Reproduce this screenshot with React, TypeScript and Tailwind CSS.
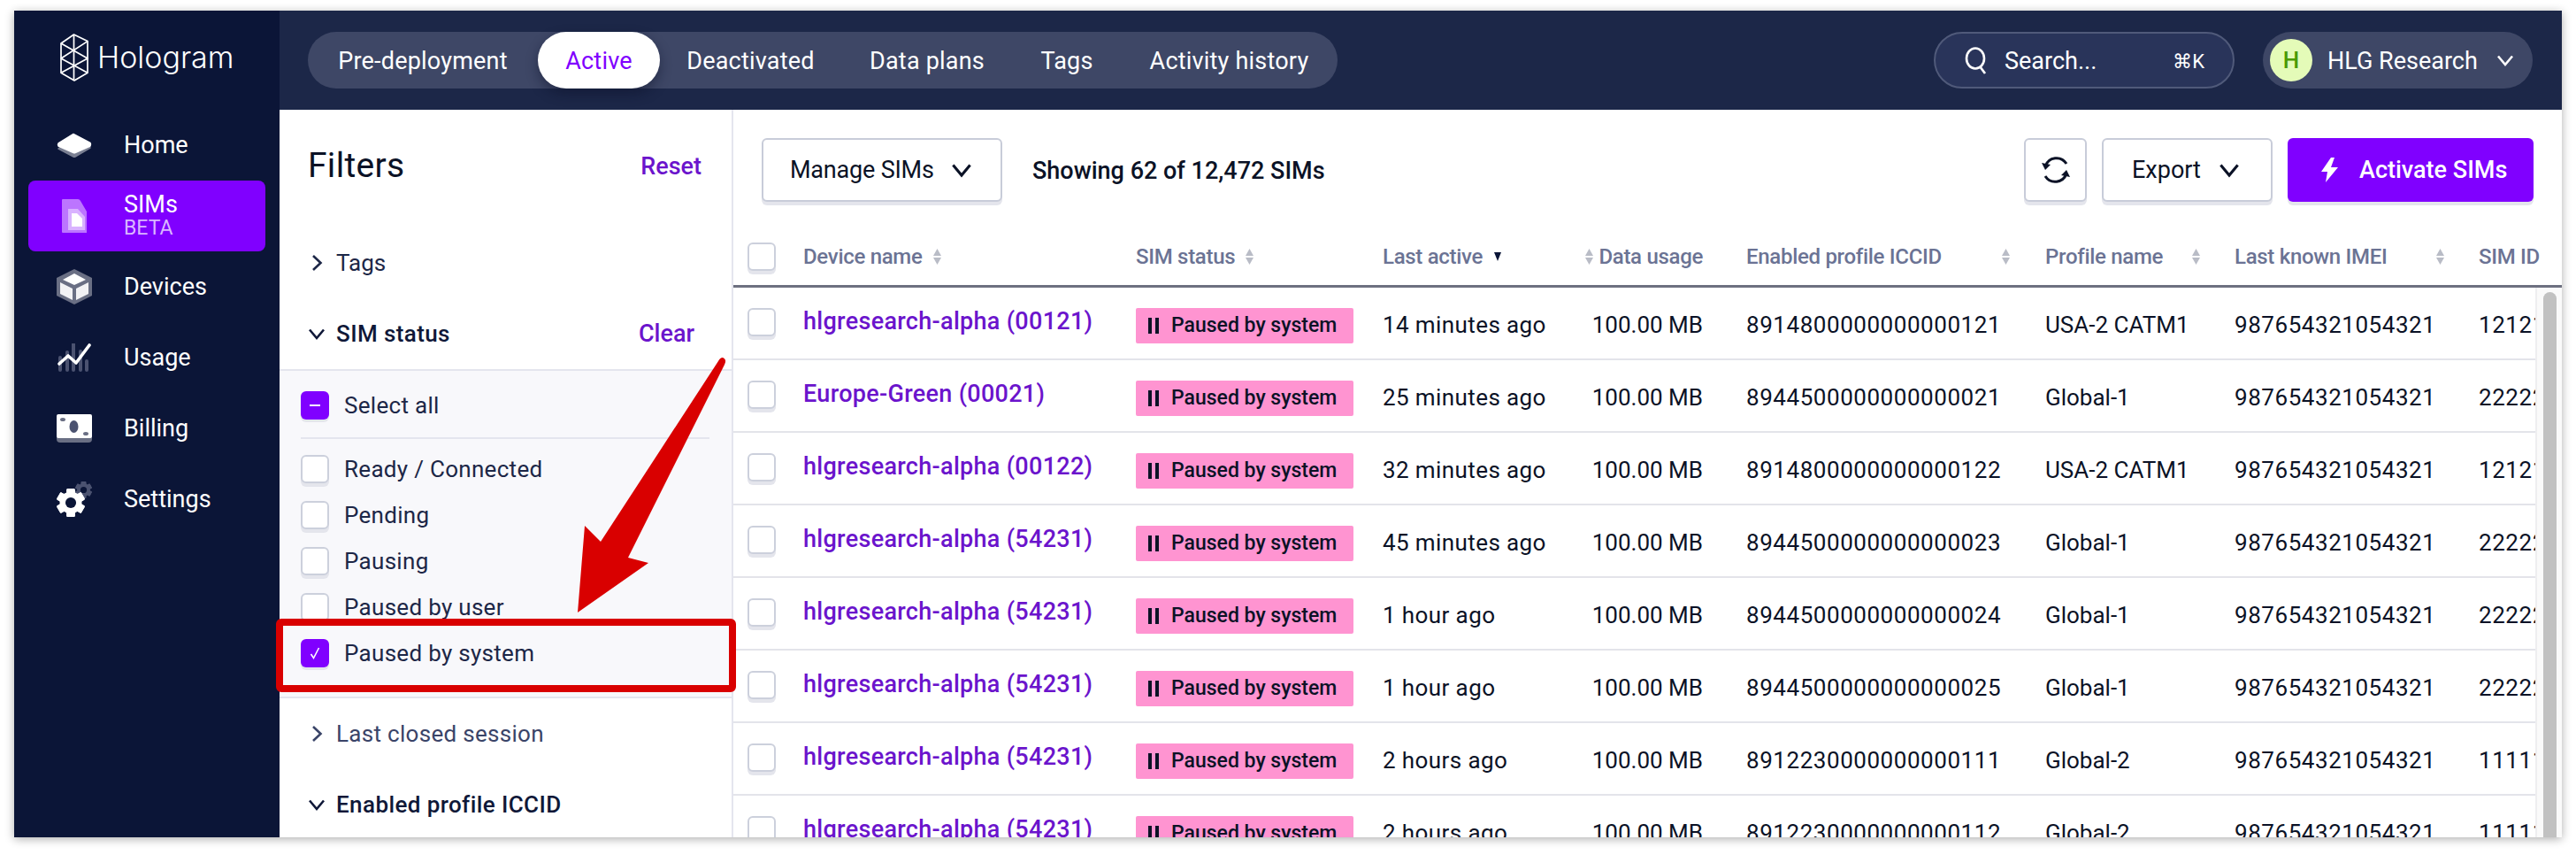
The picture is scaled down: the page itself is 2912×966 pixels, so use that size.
import React from "react";

const FONT = "font-['Roboto','Noto_Sans',sans-serif]";

function Chevron({ dir = "down", className = "", size = 20, sw = 3 }: { dir?: "down" | "right"; className?: string; size?: number; sw?: number }) {
  return (
    <svg width={size} height={size} viewBox="0 0 20 20" fill="none" stroke="currentColor" strokeWidth={sw} className={`shrink-0 ${className}`}>
      {dir === "down" ? <path d="M2 5.5 L10 15 L18 5.5" /> : <path d="M6 2 L14.5 10 L6 18" />}
    </svg>
  );
}

function Sort({ active = false }: { active?: boolean }) {
  if (active)
    return (
      <svg width="10" height="10" viewBox="0 0 10 10" className="shrink-0">
        <path d="M1 0 H9 L5 10 Z" fill="#0b1537" />
      </svg>
    );
  return (
    <svg width="9" height="18" viewBox="0 0 9 18" className="shrink-0">
      <path d="M4.5 0 L9 8 H0 Z M0 10 H9 L4.5 18 Z" fill="#b9bcc6" />
    </svg>
  );
}

function Box({ state = "off" }: { state?: "off" | "on" | "mixed" }) {
  if (state === "off")
    return <span className="block w-[32px] h-[32px] shrink-0 rounded-[6px] bg-white border-2 border-[#ccd0dc] shadow-[0_4px_0_#e4e5ec]" />;
  return (
    <span className="flex items-center justify-center w-[32px] h-[32px] shrink-0 rounded-[6px] bg-[#8000ff] shadow-[0_3px_0_#e4e5ec]">
      {state === "mixed" ? (
        <span className="block w-[12px] h-[2px] bg-white" />
      ) : (
        <svg width="14" height="16" viewBox="0 0 14 16" fill="none" stroke="#fff" strokeWidth="1.6">
          <path d="M2.5 9 L5.5 13.5 L11.5 2" />
        </svg>
      )}
    </span>
  );
}

function Logo() {
  return (
    <svg width="32" height="54" viewBox="0 0 32 54" fill="none" stroke="#fff" strokeWidth="1.7" strokeLinejoin="round">
      <path d="M1 11 L15.5 1 L31 8.6 V44.3 L16 53 L1 44.3 Z" />
      <path d="M15.5 1 V53" />
      <path d="M1 11 L31 28 L1 44.3 M31 8.6 L1 28 L31 44.3" />
    </svg>
  );
}

const HomeIcon = () => (
  <svg width="40" height="28" viewBox="0 0 40 28">
    <path d="M2 18 L20 7 L38 17 L21 27 Q20 27.6 19 27 Z" fill="#7a7f92" stroke="#7a7f92" strokeWidth="1.5" strokeLinejoin="round" />
    <path d="M19 1.5 L38 11.5 Q39 13 38 15 L21 22.5 Q20 23 19 22.5 L2 15 Q1 13 2 12 Z" fill="#fff" stroke="#fff" strokeWidth="1.5" strokeLinejoin="round" />
  </svg>
);
const SimIcon = () => (
  <svg width="28" height="38" viewBox="0 0 28 38">
    <path d="M1 0 H18 Q20 0 21 2 L28 14 V38 H1 Q0 38 0 37 V1 Q0 0 1 0 Z" fill="#bc75ff" />
    <path d="M7 11 H18 L26 20 V35 H7 Z" fill="#d9b3ff" />
    <path d="M11 16 H17 L23 22 V31 H11 Z" fill="#fff" />
  </svg>
);
const DevicesIcon = () => (
  <svg width="40" height="40" viewBox="0 0 40 40">
    <path d="M20 0 L40 10 V30 L20 40 L0 30 V10 Z" fill="#6a6f84" />
    <path d="M20 5 L33 12 L20 18 L7 12 Z" fill="#fff" />
    <path d="M4 15 L18 22 V35 L4 28 Z M36 15 L22 22 V35 L36 28 Z" fill="#f2f2f5" />
  </svg>
);
const UsageIcon = () => (
  <svg width="40" height="32" viewBox="0 0 40 32" fill="none">
    <g stroke="#4b5270" strokeWidth="4" strokeLinecap="round">
      <path d="M4 16 V30 M12 10 V30 M19 1 V30 M27 9 V30 M34 20 V30" />
    </g>
    <path d="M3 23 L13 14 L22 22 L37 2" stroke="#fff" strokeWidth="3.6" strokeLinecap="round" strokeLinejoin="round" />
  </svg>
);
const BillingIcon = () => (
  <svg width="40" height="32" viewBox="0 0 40 32">
    <path d="M0 24 H40 V28 Q40 32 36 32 H4 Q0 32 0 28 Z" fill="#6a6f84" />
    <rect x="0" y="0" width="40" height="27" rx="2" fill="#fff" />
    <ellipse cx="19.5" cy="14" rx="5" ry="7" fill="#4b5270" />
    <ellipse cx="7" cy="6" rx="3" ry="2" fill="#6a6f84" />
    <ellipse cx="33" cy="22" rx="3" ry="2" fill="#6a6f84" />
  </svg>
);
function Gear({ cx, cy, r, color, hole }: { cx: number; cy: number; r: number; color: string; hole: string }) {
  const teeth = [0, 60, 120, 180, 240, 300];
  return (
    <g>
      {teeth.map((a) => (
        <rect key={a} x={cx - r * 0.3} y={cy - r} width={r * 0.6} height={r * 2} rx={r * 0.1} fill={color} transform={`rotate(${a} ${cx} ${cy})`} />
      ))}
      <circle cx={cx} cy={cy} r={r * 0.78} fill={color} />
      <circle cx={cx} cy={cy} r={r * 0.38} fill={hole} />
    </g>
  );
}
const SettingsIcon = () => (
  <svg width="40" height="40" viewBox="0 0 40 40">
    <Gear cx={30.5} cy={9.5} r={9.5} color="#4b5270" hole="#0b1537" />
    <Gear cx={16} cy={24} r={16} color="#fff" hole="#0b1537" />
  </svg>
);

const NAV = [
  { label: "Home", icon: <HomeIcon /> },
  { label: "SIMs", icon: <SimIcon />, active: true },
  { label: "Devices", icon: <DevicesIcon /> },
  { label: "Usage", icon: <UsageIcon /> },
  { label: "Billing", icon: <BillingIcon /> },
  { label: "Settings", icon: <SettingsIcon /> },
];

const TABS = [
  { t: "Pre-deployment", w: "w-[260px]" },
  { t: "Active", w: "w-[138px]" },
  { t: "Deactivated", w: "w-[205px]" },
  { t: "Data plans", w: "w-[194px]" },
  { t: "Tags", w: "w-[122px]" },
  { t: "Activity history", w: "w-[245px]" },
];

const ROWS = [
  ["hlgresearch-alpha (00121)", "14 minutes ago", "8914800000000000121", "USA-2 CATM1", "12121212"],
  ["Europe-Green (00021)", "25 minutes ago", "8944500000000000021", "Global-1", "22222222"],
  ["hlgresearch-alpha (00122)", "32 minutes ago", "8914800000000000122", "USA-2 CATM1", "12121212"],
  ["hlgresearch-alpha (54231)", "45 minutes ago", "8944500000000000023", "Global-1", "22222222"],
  ["hlgresearch-alpha (54231)", "1 hour ago", "8944500000000000024", "Global-1", "22222222"],
  ["hlgresearch-alpha (54231)", "1 hour ago", "8944500000000000025", "Global-1", "22222222"],
  ["hlgresearch-alpha (54231)", "2 hours ago", "8912230000000000111", "Global-2", "11111111"],
  ["hlgresearch-alpha (54231)", "2 hours ago", "8912230000000000112", "Global-2", "11111111"],
];

const GRID = "grid grid-cols-[63px_376px_279px_217px_194px_338px_214px_276px_64px] w-[2021px]";

const STATUS = ["Ready / Connected", "Pending", "Pausing", "Paused by user"];

export default function App() {
  return (
    <div className={`${FONT} w-[2912px] h-[966px] bg-white pt-[12px] pl-[16px] overflow-hidden`}>
      <div className="relative flex w-[2880px] h-[934px] overflow-hidden shadow-[0_2px_10px_rgba(0,0,0,0.32)]">
        <aside className="w-[300px] shrink-0 bg-[#0b1537] text-white">
          <div className="h-[112px] flex items-center pl-[52px] gap-[10px] pb-[6px]">
            <Logo />
            <span className="font-['Inter',sans-serif] text-[34px] font-light leading-none">Hologram</span>
          </div>
          <nav className="flex flex-col">
            {NAV.map((n) => (
              <div key={n.label} className="h-[80px] px-[16px]">
                <div className={`h-full flex items-center rounded-[8px] ${n.active ? "bg-[#8000ff]" : ""}`}>
                  <span className="w-[108px] pl-[32px] flex justify-start shrink-0">
                    <span className="w-[40px] flex justify-center">{n.icon}</span>
                  </span>
                  {n.active ? (
                    <span className="flex flex-col">
                      <span className="text-[27px] leading-[28px]">SIMs</span>
                      <span className="text-[23px] leading-[26px] text-[#dab6ff]">BETA</span>
                    </span>
                  ) : (
                    <span className="text-[27px] leading-none">{n.label}</span>
                  )}
                </div>
              </div>
            ))}
          </nav>
        </aside>

        <div className="flex-1 min-w-0 flex flex-col">
          <header className="h-[112px] shrink-0 bg-[#1c2748] flex items-center justify-between pl-[32px] pr-[33px] text-white">
            <div className="flex h-[64px] rounded-full bg-[#3e4766] text-[27px]">
              {TABS.map(({ t, w }) => (
                <span
                  key={t}
                  className={`flex items-center justify-center pt-[2px] rounded-full tracking-[0.2px] ${w} ${t === "Active" ? "bg-white text-[#8000ff] shadow-[0_6px_14px_rgba(10,15,40,0.45)]" : ""}`}
                >
                  {t}
                </span>
              ))}
            </div>
            <div className="flex items-center gap-[32px]">
              <div className="flex items-center w-[340px] h-[64px] rounded-full border-2 border-[#505a7a] bg-[#29345a] pl-[33px] pr-[32px] text-[27px]">
                <svg width="26" height="32" viewBox="0 0 26 32" fill="none" stroke="#fff" strokeWidth="2.6" className="shrink-0">
                  <ellipse cx="12" cy="14" rx="10" ry="11.5" />
                  <path d="M17 23 L23 31" />
                </svg>
                <span className="ml-[19px] flex-1 pt-[2px]">Search...</span>
                <span className="text-[22px] pt-[2px]">⌘K</span>
              </div>
              <div className="flex items-center w-[305px] h-[64px] rounded-full bg-[#3e4766] pl-[8px] text-[27px]">
                <span className="flex items-center justify-center w-[48px] h-[48px] rounded-full bg-[#e4fbb8] text-[#4a9a00] font-medium text-[26px]">H</span>
                <span className="ml-[17px] flex-1 pt-[2px]">HLG Research</span>
                <Chevron className="mr-[21px]" size={20} sw={2.6} />
              </div>
            </div>
          </header>

          <div className="flex flex-1 min-h-0">
            <section className="w-[513px] shrink-0 border-r-2 border-[#e4e5ee] bg-white overflow-hidden">
              <div className="h-[126px] mb-[7px] flex items-center justify-between pl-[32px] pr-[34px]">
                <span className="text-[39px] tracking-[0.3px] text-[#0b1226]">Filters</span>
                <span className="text-[27px] font-medium text-[#6b14cc] pt-[2px]">Reset</span>
              </div>
              <div className="h-[80px] flex items-center pl-[32px] text-[#1d2747] text-[26px]">
                <Chevron dir="right" size={20} className="mr-[12px]" sw={2.6} />
                Tags
              </div>
              <div className="h-[82px] flex items-center justify-between pl-[32px] pr-[42px] border-b-2 border-[#e4e5ee]">
                <span className="flex items-center text-[26px] tracking-[0.4px] font-medium text-[#0f1838]">
                  <Chevron size={20} className="mr-[12px]" sw={2.6} />
                  SIM status
                </span>
                <span className="text-[27px] font-medium text-[#6b14cc]">Clear</span>
              </div>
              <div className="h-[370px] bg-[#f8f8fb] border-b-2 border-[#e4e5ee] pt-[23px] pl-[24px] pr-[25px]">
                <div className="flex items-center gap-[17px] h-[32px] text-[26px] tracking-[0.3px] text-[#1d2747]">
                  <Box state="mixed" />
                  Select all
                </div>
                <div className="h-[2px] bg-[#e4e5ee] mt-[20px] mb-[18px]" />
                <div className="flex flex-col gap-[20px]">
                  {STATUS.map((s) => (
                    <div key={s} className="flex items-center gap-[17px] h-[32px] text-[26px] tracking-[0.3px] text-[#1d2747]">
                      <Box />
                      {s}
                    </div>
                  ))}
                  <div className="flex items-center gap-[17px] h-[32px] text-[26px] tracking-[0.3px] text-[#1d2747]">
                    <Box state="on" />
                    Paused by system
                  </div>
                </div>
              </div>
              <div className="h-[80px] flex items-center pl-[32px] text-[#3a4468] text-[26px] tracking-[0.3px]">
                <Chevron dir="right" size={20} className="mr-[12px]" sw={2.6} />
                Last closed session
              </div>
              <div className="h-[80px] flex items-center pl-[32px] text-[26px] tracking-[0.4px] font-medium text-[#0f1838]">
                <Chevron size={20} className="mr-[12px]" sw={2.6} />
                Enabled profile ICCID
              </div>
            </section>

            <main className="flex-1 min-w-0 flex flex-col overflow-hidden">
              <div className="h-[140px] shrink-0 flex justify-between pl-[32px] pr-[32px] pt-[32px]">
                <div className="flex items-start text-[#0b1226]">
                  <button className="flex items-center justify-between w-[272px] h-[72px] pl-[30px] pr-[32px] rounded-[6px] bg-white border-2 border-[#c8ccd9] shadow-[0_4px_0_#e4e5ec] text-[27px] tracking-[-0.2px]">
                    Manage SIMs
                    <Chevron size={24} sw={2.6} />
                  </button>
                  <span className="ml-[34px] mt-[17px] text-[27px] font-medium">Showing 62 of 12,472 SIMs</span>
                </div>
                <div className="flex items-start gap-[17px]">
                  <button className="flex items-center justify-center w-[71px] h-[72px] rounded-[6px] bg-white border-2 border-[#c8ccd9] shadow-[0_4px_0_#e4e5ec]">
                    <svg width="34" height="34" viewBox="0 0 34 34" fill="none" stroke="#0b1226" strokeWidth="3">
                      <path d="M5 13 A13.5 14 0 0 1 29 10" />
                      <path d="M29 21 A13.5 14 0 0 1 5 24" />
                      <path d="M1 9 L5 17 L11 11 Z M33 25 L29 17 L23 23 Z" fill="#0b1226" stroke="none" />
                    </svg>
                  </button>
                  <button className="flex items-center w-[193px] h-[72px] pl-[32px] rounded-[6px] bg-white border-2 border-[#c8ccd9] shadow-[0_4px_0_#e4e5ec] text-[27px] text-[#0b1226]">
                    Export
                    <Chevron size={24} sw={2.6} className="ml-[20px]" />
                  </button>
                  <button className="flex items-center w-[278px] h-[72px] pl-[36px] rounded-[6px] bg-[#8000ff] shadow-[0_4px_0_#e4e5ec] text-[27px] font-medium text-white">
                    <svg width="22" height="28" viewBox="0 0 22 28" fill="#fff">
                      <path d="M13 0 L2 16 H9 L7 28 L21 11 H13 L17 0 Z" />
                    </svg>
                    <span className="ml-[23px]">Activate SIMs</span>
                  </button>
                </div>
              </div>

              <div className="h-[61px] shrink-0 border-b-[3px] border-[#6d7080] overflow-hidden">
                <div className={`${GRID} ml-[16px] h-full items-center text-[24px] tracking-[-0.3px] font-medium text-[#6b7394]`}>
                  <span className="mb-[6px]"><Box /></span>
                  <span className="flex items-center gap-[12px] mb-[6px]">Device name <Sort /></span>
                  <span className="flex items-center gap-[12px] mb-[6px]">SIM status <Sort /></span>
                  <span className="flex items-center gap-[12px] mb-[6px]">Last active <Sort active /></span>
                  <span className="flex items-center justify-end gap-[6px] pr-[49px] mb-[6px] whitespace-nowrap"><Sort /> Data usage</span>
                  <span className="flex items-center justify-between pr-[40px] mb-[6px] whitespace-nowrap">Enabled profile ICCID <Sort /></span>
                  <span className="flex items-center justify-between pr-[39px] mb-[6px] whitespace-nowrap">Profile name <Sort /></span>
                  <span className="flex items-center justify-between pr-[39px] mb-[6px] whitespace-nowrap">Last known IMEI <Sort /></span>
                  <span className="mb-[6px] whitespace-nowrap">SIM ID</span>
                </div>
              </div>

              <div className="flex-1 min-h-0 flex">
                <div className="w-[2037px] shrink-0 overflow-hidden">
                  {ROWS.map((r, i) => (
                    <div key={i} className="h-[82px] border-b-2 border-[#e3e4ea] pl-[16px]">
                      <div className={`${GRID} h-full items-center text-[26px] text-[#0b1226]`}>
                        <span className="mb-[2px]"><Box /></span>
                        <span className="mb-[4px] text-[#6b14cc] text-[27px] tracking-[0.3px] font-medium whitespace-nowrap">{r[0]}</span>
                        <span className="mt-[6px] flex items-center w-[246px] h-[40px] rounded-[2px] bg-[#ff94d1] pl-[14px] text-[23px] font-medium whitespace-nowrap">
                          <svg width="12" height="20" viewBox="0 0 12 20" fill="#0b1226" className="mr-[14px]">
                            <rect x="0" y="1" width="4" height="18" />
                            <rect x="8" y="1" width="4" height="18" />
                          </svg>
                          Paused by system
                        </span>
                        <span className="mt-[4px] tracking-[0.4px] whitespace-nowrap">{r[1]}</span>
                        <span className="mt-[4px] text-right pr-[49px]">100.00 MB</span>
                        <span className="mt-[4px] tracking-[0.55px]">{r[2]}</span>
                        <span className="mt-[4px] whitespace-nowrap">{r[3]}</span>
                        <span className="mt-[4px] tracking-[0.55px]">987654321054321</span>
                        <span className="mt-[4px] tracking-[0.55px] overflow-hidden whitespace-nowrap">{r[4]}</span>
                      </div>
                    </div>
                  ))}
                </div>
                <div className="flex-1 bg-[#fafafa] border-l-2 border-[#eeeef0] pt-[5px] pl-[7px] pr-[6px]">
                  <div className="h-full rounded-t-full bg-[#c1c1c1]" />
                </div>
              </div>
            </main>
          </div>
        </div>

        <div className="absolute left-[296px] top-[687px] w-[520px] h-[83px] border-[8px] border-[#d90000] rounded-[6px]" />
        <svg width="2880" height="934" viewBox="0 0 2880 934" className="absolute left-0 top-0 pointer-events-none">
          <path d="M801 392 Q806 394 803 400 L694 618 L717 624 L637 680 L645 582 L663 600 L796 396 Q798 392 801 392 Z" fill="#d90000" />
        </svg>
      </div>
    </div>
  );
}
